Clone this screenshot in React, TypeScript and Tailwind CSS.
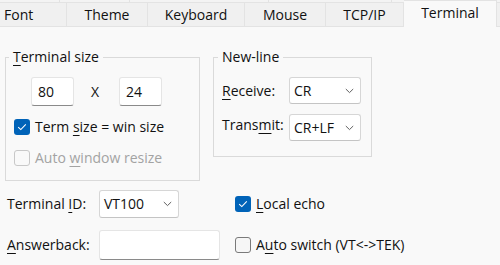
import { ReactNode } from 'react'

const tabs = [
  { label: 'Font', cls: 'w-[67px] justify-start pl-[4px]' },
  { label: 'Theme', cls: 'w-[81px] justify-center' },
  { label: 'Keyboard', cls: 'w-[97px] justify-center' },
  { label: 'Mouse', cls: 'w-[81px] justify-center' },
  { label: 'TCP/IP', cls: 'w-[78px] justify-center' },
]

function Mn({ children }: { children: ReactNode }) {
  return <span className="underline decoration-1 underline-offset-[3px]">{children}</span>
}

function Chevron() {
  return (
    <svg width="9" height="6" viewBox="0 0 9 6" className="shrink-0">
      <path d="M0.8 1 L4.5 4.6 L8.2 1" fill="none" stroke="#606060" strokeWidth="1" />
    </svg>
  )
}

function Select({ value, className }: { value: string; className: string }) {
  return (
    <div
      className={`flex items-center justify-between rounded-[3px] border border-[#d6d6d6] border-b-[#c4c4c4] bg-white pl-[4px] pr-[6px] ${className}`}
    >
      <span>{value}</span>
      <Chevron />
    </div>
  )
}

function TextBox({ value, className }: { value?: string; className: string }) {
  return (
    <div
      className={`flex items-center rounded-[3px] border border-[#e5e5e5] border-b-[#8a8a8a] bg-white pl-[6px] ${className}`}
    >
      {value}
    </div>
  )
}

function Check({ checked, disabled, children }: { checked?: boolean; disabled?: boolean; children: ReactNode }) {
  return (
    <div className="flex h-[20px] items-center gap-[5px]">
      {checked ? (
        <div className="flex h-[16px] w-[16px] items-center justify-center rounded-[3px] bg-[#0063b8]">
          <svg width="10" height="8" viewBox="0 0 10 8">
            <path d="M1.2 4.2 L3.8 6.6 L8.8 1.4" fill="none" stroke="white" strokeWidth="1.1" />
          </svg>
        </div>
      ) : (
        <div
          className={`h-[16px] w-[16px] rounded-[3px] border ${
            disabled ? 'border-[#c8c8c8] bg-[#f9f9f9]' : 'border-[#7a7a7a] bg-[#f6f6f6]'
          }`}
        />
      )}
      <span className={disabled ? 'text-[#a3a3a3]' : ''}>{children}</span>
    </div>
  )
}

export default function App() {
  return (
    <div className="h-[265px] w-[500px] overflow-hidden bg-[#f9f9f9] font-['Open_Sans',sans-serif] text-[14px] leading-[20px] text-[#111]">
      {/* tab strip */}
      <div className="relative h-[27px]">
        <div className="flex h-[3px]">
          <div className="w-[60px] border-r border-[#e2e2e2] bg-[#f3f3f3]" />
          <div className="w-[70px] border-r border-[#e2e2e2] bg-[#f3f3f3]" />
          <div className="w-[139px] border-r border-[#e2e2e2] bg-[#f3f3f3]" />
          <div className="w-[123px] border-r border-[#e2e2e2] bg-[#f3f3f3]" />
          <div className="flex-1 bg-[#f3f3f3]" />
        </div>
        <div className="absolute inset-x-0 bottom-0 flex h-[25px] items-end">
          {tabs.map(t => (
            <div
              key={t.label}
              className={`flex h-[25px] items-center border-r border-t border-b border-[#e3e3e3] bg-[#f0f0f0] pt-[1px] ${t.cls}`}
            >
              {t.label}
            </div>
          ))}
          <div className="-mt-[2px] flex h-[27px] w-[93px] items-center justify-center self-end border-r border-t border-[#e3e3e3] bg-[#f9f9f9] pb-[2px]">
            Terminal
          </div>
          <div className="h-[25px] flex-1 border-t border-b border-[#e3e3e3] bg-[#f0f0f0]" />
        </div>
      </div>

      {/* group boxes */}
      <div className="mt-[20px] flex items-start pl-[5px]">
        <fieldset className="h-[134px] w-[195px] border border-[#dadada] pl-[25px]">
          <legend className="-ml-[22px] px-[4px] leading-[20px]">
            <Mn>T</Mn>erminal size
          </legend>
          <div className="mt-[10px] flex h-[29px] items-center">
            <TextBox value="80" className="h-[29px] w-[43px]" />
            <span className="ml-[17px] w-[28px]">X</span>
            <TextBox value="24" className="h-[29px] w-[43px]" />
          </div>
          <div className="-ml-[17px] mt-[11px] flex flex-col gap-[11px]">
            <Check checked>
              Term <Mn>s</Mn>ize = win size
            </Check>
            <Check disabled>
              Auto <Mn>w</Mn>indow resize
            </Check>
          </div>
        </fieldset>

        <fieldset className="ml-[13px] h-[110px] w-[159px] border border-[#dadada] pl-[8px]">
          <legend className="-ml-[4px] px-[4px] leading-[20px]">New-line</legend>
          <div className="mt-[10px] grid grid-cols-[67px_72px] items-center gap-y-[10px]">
            <span>
              <Mn>R</Mn>eceive:
            </span>
            <Select value="CR" className="h-[27px]" />
            <span className="-mt-[5px]">
              Trans<Mn>m</Mn>it:
            </span>
            <Select value="CR+LF" className="h-[27px]" />
          </div>
        </fieldset>
      </div>

      {/* bottom rows */}
      <div className="mt-[9px] grid grid-cols-[92px_136px_auto] items-center gap-y-[12px] pl-[7px]">
        <span>
          Terminal <Mn>I</Mn>D:
        </span>
        <div>
          <Select value="VT100" className="h-[28px] w-[80px]" />
        </div>
        <Check checked>
          <Mn>L</Mn>ocal echo
        </Check>

        <span>
          <Mn>A</Mn>nswerback:
        </span>
        <div>
          <TextBox className="h-[30px] w-[121px]" />
        </div>
        <Check>
          A<Mn>u</Mn>to switch (VT&lt;-&gt;TEK)
        </Check>
      </div>
    </div>
  )
}
